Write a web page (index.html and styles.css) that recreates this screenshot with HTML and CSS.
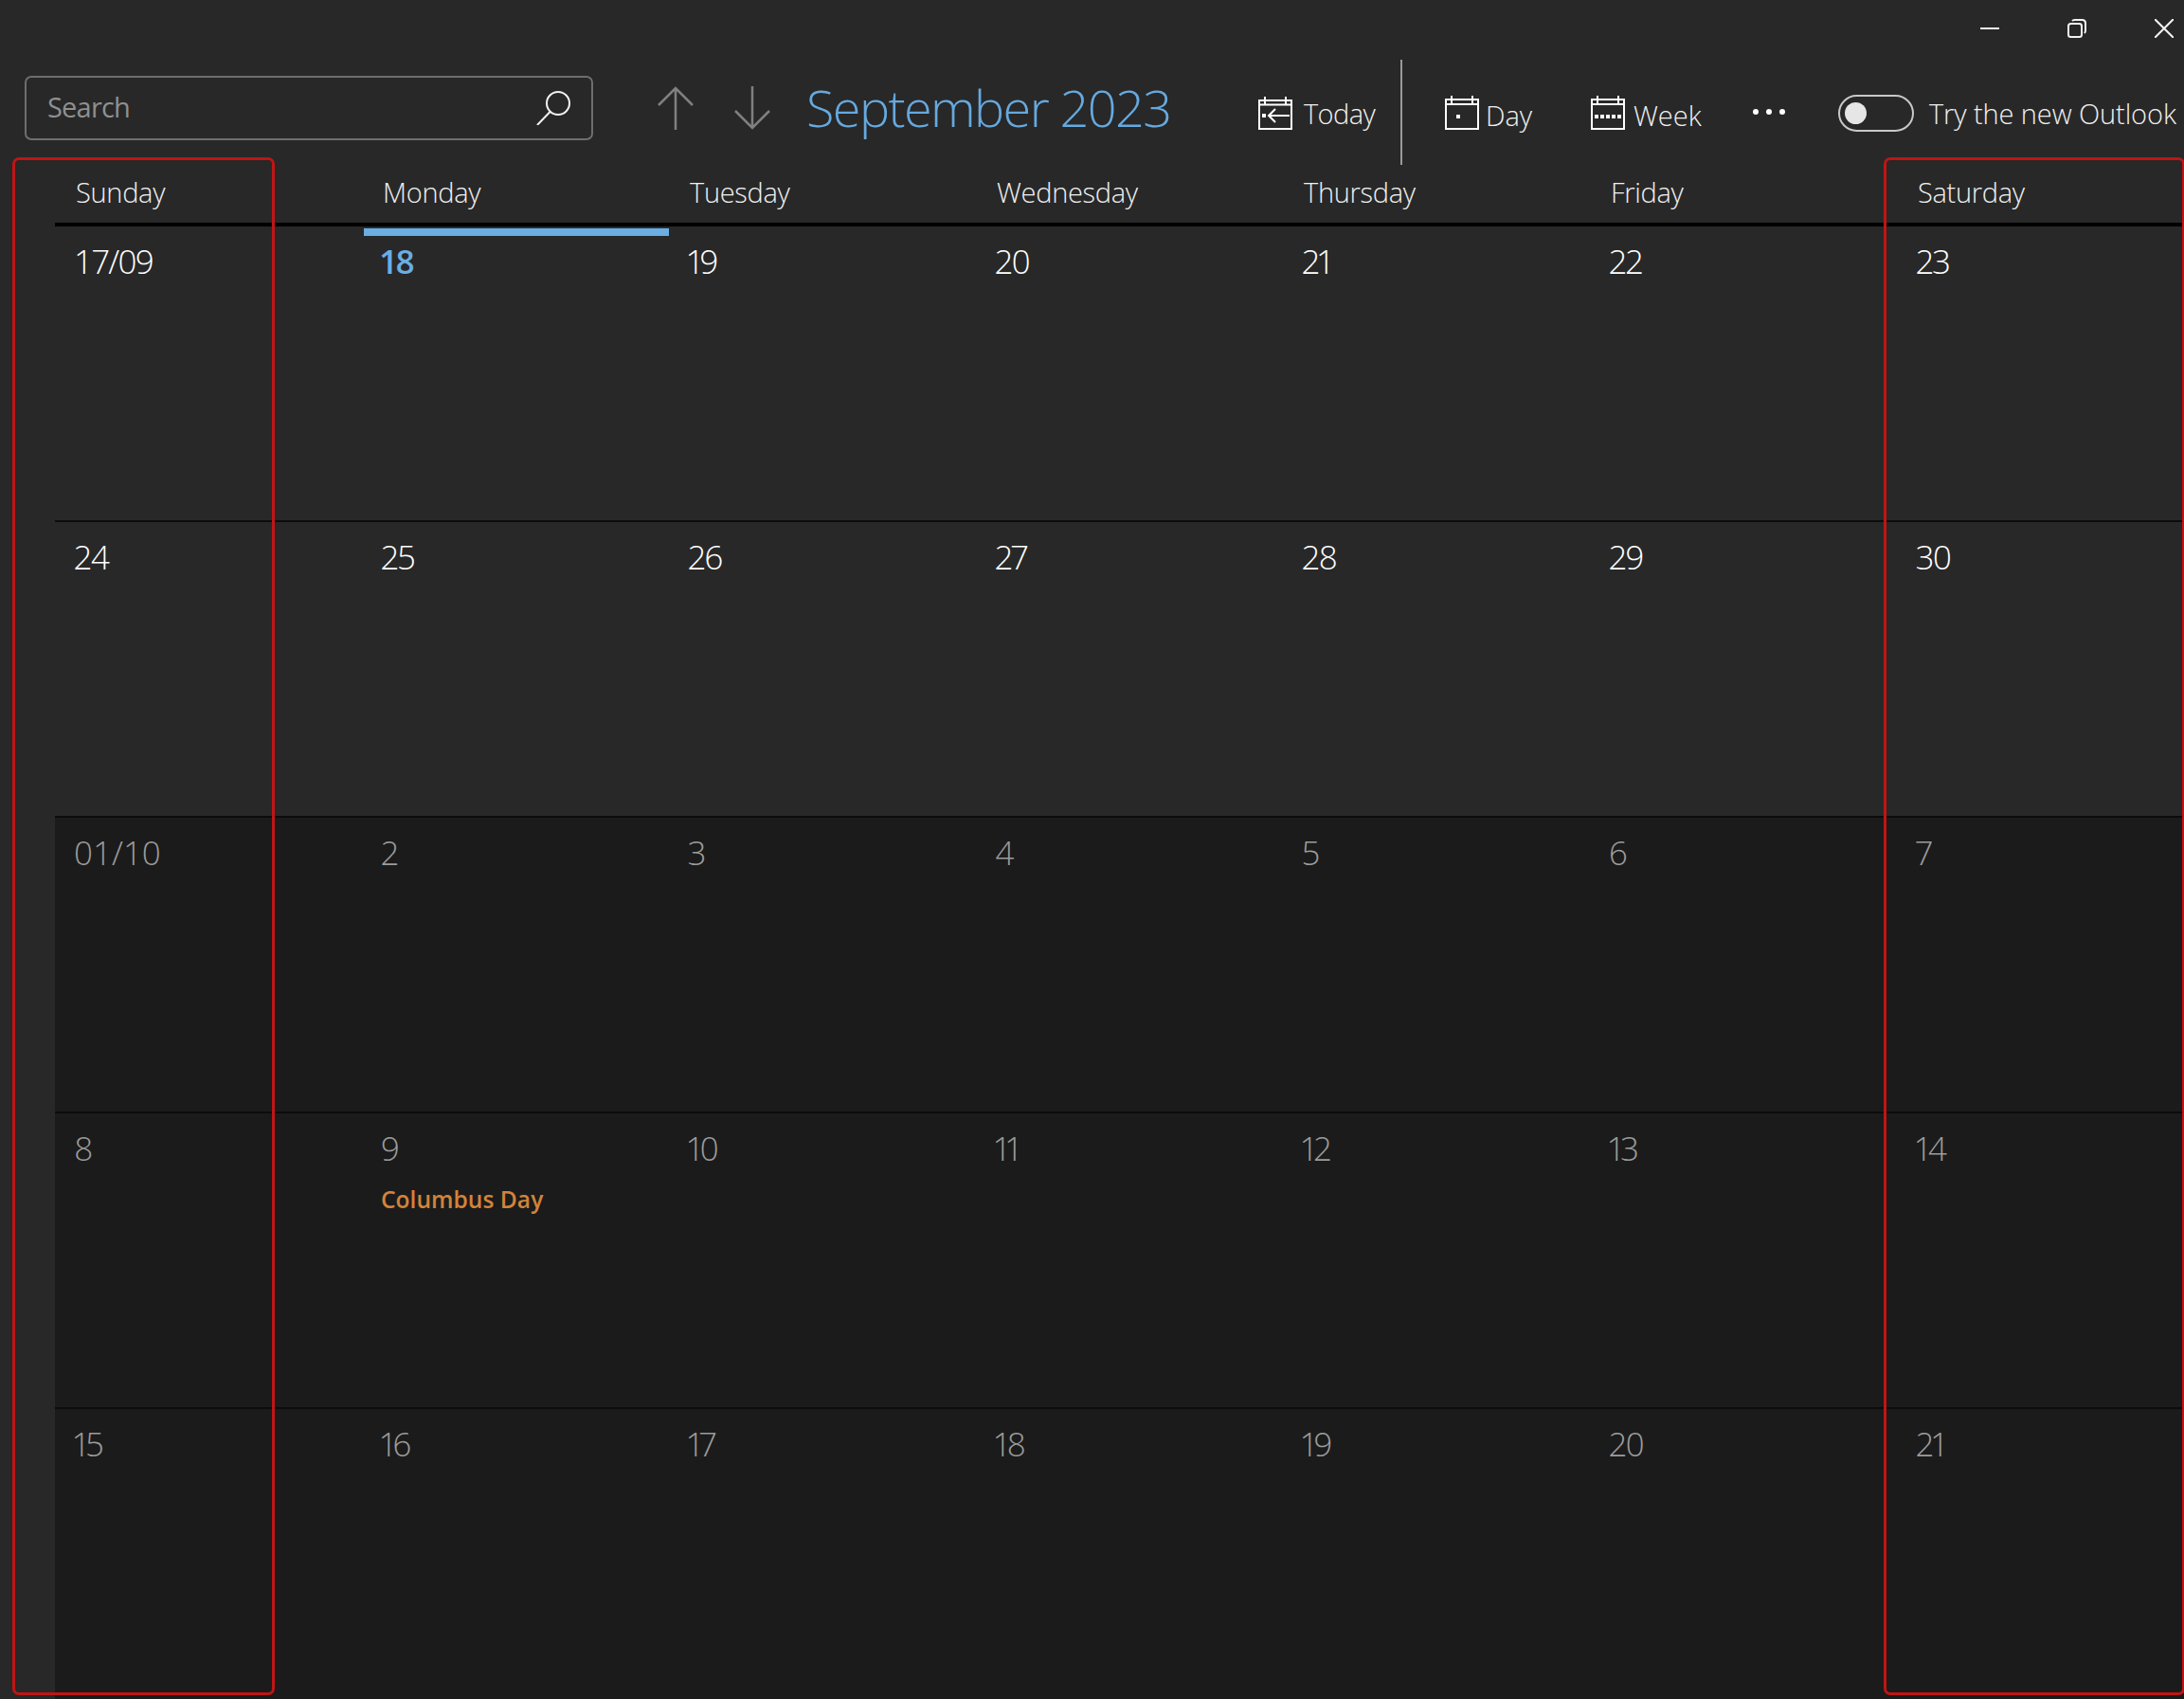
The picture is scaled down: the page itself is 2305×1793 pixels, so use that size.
FILE: index.html
```html
<!DOCTYPE html>
<html lang="en">
<head>
  <meta charset="UTF-8" />
  <title>Calendar</title>
  <link rel="stylesheet" href="styles.css">
</head>
<body>
  <div class="window">
    <div class="titlebar">
      <svg class="win-icon win-min" viewBox="0 0 20 20"><path d="M0 10H20" /></svg>
      <svg class="win-icon win-restore" viewBox="0 0 20 20"><rect x="1" y="5" width="14" height="14" rx="2.5" /><path d="M5 2.2C5.6 1.4 6.4 1 7.5 1H15.5C17.5 1 19 2.500 19 4.500V12.500C19 13.600 18.600 14.400 17.800 15" /></svg>
      <svg class="win-icon win-close" viewBox="0 0 20 20"><path d="M0 0L20 20M20 0L0 20" /></svg>
    </div>

    <div class="toolbar">
      <div class="search">
        <span class="search-text">Search</span>
        <svg class="search-icon" viewBox="0 0 37 36"><circle cx="23" cy="13" r="12" /><path d="M14.500 22L1 36" /></svg>
      </div>
      <svg class="nav-arrow nav-up" viewBox="0 0 38 46"><path d="M19 46V2M1 20L19 2L37 20" /></svg>
      <svg class="nav-arrow nav-down" viewBox="0 0 38 46"><path d="M19 0V44M1 26L19 44L37 26" /></svg>
      <div class="month-title">September 2023</div>

      <div class="tool tool-today">
        <svg class="cal-icon" viewBox="0 0 36 36"><path d="M1 4H35V34H1ZM1 8.500H35M7 0V8.500M29 0V8.500M11 20H33M18 13L11 20L18 27" /><rect class="cal-dot" x="4" y="18" width="4" height="4" /></svg>
        <span>Today</span>
      </div>
      <div class="tool-sep"></div>
      <div class="tool tool-day">
        <svg class="cal-icon" viewBox="0 0 36 36"><path d="M1 4H35V35H1ZM1 9H35M7 0V9M29 0V9" /><rect class="cal-dot" x="12" y="20" width="4" height="4" /></svg>
        <span>Day</span>
      </div>
      <div class="tool tool-week">
        <svg class="cal-icon" viewBox="0 0 36 36"><path d="M1 4H35V35H1ZM1 9H35M7 0V9M29 0V9" /><path class="cal-dash" d="M4 22H32" /></svg>
        <span>Week</span>
      </div>
      <div class="more"><i></i><i></i><i></i></div>
      <div class="toggle"><div class="knob"></div></div>
      <div class="toggle-label">Try the new Outlook</div>
    </div>

    <div class="weekdays">
      <div>Sunday</div>
      <div>Monday</div>
      <div>Tuesday</div>
      <div>Wednesday</div>
      <div>Thursday</div>
      <div>Friday</div>
      <div>Saturday</div>
    </div>

    <div class="week">
      <div class="day"><span class="num num-date">17/09</span></div>
      <div class="day today"><span class="num">18</span></div>
      <div class="day"><span class="num">19</span></div>
      <div class="day"><span class="num">20</span></div>
      <div class="day"><span class="num">21</span></div>
      <div class="day"><span class="num">22</span></div>
      <div class="day"><span class="num">23</span></div>
    </div>
    <div class="week">
      <div class="day"><span class="num">24</span></div>
      <div class="day"><span class="num">25</span></div>
      <div class="day"><span class="num">26</span></div>
      <div class="day"><span class="num">27</span></div>
      <div class="day"><span class="num">28</span></div>
      <div class="day"><span class="num">29</span></div>
      <div class="day"><span class="num">30</span></div>
    </div>
    <div class="week other">
      <div class="day"><span class="num num-date num-wide">01/10</span></div>
      <div class="day"><span class="num">2</span></div>
      <div class="day"><span class="num">3</span></div>
      <div class="day"><span class="num">4</span></div>
      <div class="day"><span class="num">5</span></div>
      <div class="day"><span class="num">6</span></div>
      <div class="day"><span class="num">7</span></div>
    </div>
    <div class="week other">
      <div class="day"><span class="num">8</span></div>
      <div class="day"><span class="num">9</span><span class="event">Columbus Day</span></div>
      <div class="day"><span class="num">10</span></div>
      <div class="day"><span class="num">11</span></div>
      <div class="day"><span class="num">12</span></div>
      <div class="day"><span class="num">13</span></div>
      <div class="day"><span class="num">14</span></div>
    </div>
    <div class="week other last">
      <div class="day"><span class="num">15</span></div>
      <div class="day"><span class="num">16</span></div>
      <div class="day"><span class="num">17</span></div>
      <div class="day"><span class="num">18</span></div>
      <div class="day"><span class="num">19</span></div>
      <div class="day"><span class="num">20</span></div>
      <div class="day"><span class="num">21</span></div>
    </div>

    <div class="mark mark-sunday"></div>
    <div class="mark mark-saturday"></div>
  </div>
</body>
</html>
```

FILE: styles.css
```css
html, body {
  margin: 0;
  padding: 0;
  background: #282828;
}
.window {
  position: relative;
  width: 2305px;
  height: 1793px;
  overflow: hidden;
  background: #282828;
  color: #fff;
  font-family: 'Open Sans', 'Liberation Sans', sans-serif;
  font-weight: 300;
  font-size: 29px;
}

/* title bar */
.titlebar {
  display: flex;
  align-items: center;
  height: 64px;
  padding-left: 2090px;
  box-sizing: border-box;
  padding-bottom: 4px;
}
.win-icon {
  width: 20px;
  height: 20px;
  fill: none;
  stroke: #f2f2f2;
  stroke-width: 2;
}
.win-restore {
  margin-left: 72px;
}
.win-close {
  margin-left: 72px;
}

/* toolbar */
.toolbar {
  display: flex;
  align-items: center;
  height: 100px;
  padding-left: 26px;
  white-space: nowrap;
}
.search {
  display: flex;
  align-items: center;
  justify-content: space-between;
  width: 600px;
  height: 68px;
  box-sizing: border-box;
  margin-top: -1px;
  padding: 0 21px 0 22px;
  border: 2px solid #6e6e6e;
  border-radius: 7px;
}
.search-text {
  color: #8f8f8f;
  font-weight: 400;
  letter-spacing: -0.8px;
  margin-bottom: 2px;
}
.search-icon {
  width: 37px;
  height: 36px;
  fill: none;
  stroke: #f2f2f2;
  stroke-width: 2;
}
.nav-arrow {
  width: 38px;
  height: 46px;
  fill: none;
  stroke: #808080;
  stroke-width: 2.5;
}
.nav-up {
  margin-left: 68px;
}
.nav-down {
  margin-left: 43px;
}
.month-title {
  width: 477px;
  margin-left: 38px;
  color: #66a9df;
  font-size: 54px;
  letter-spacing: -1.6px;
  margin-top: -2px;
}
.tool {
  display: flex;
  align-items: center;
  gap: 12px;
  color: #f0f0f0;
}
.cal-icon {
  width: 36px;
  height: 36px;
  fill: none;
  stroke: #fff;
  stroke-width: 2;
}
.cal-dot {
  fill: #fff;
  stroke: none;
}
.cal-dash {
  stroke-width: 4;
  stroke-dasharray: 4 2;
}
.tool-today {
  width: 150px;
  margin-top: 11px;
}
.tool-today span {
  margin-bottom: 1px;
  letter-spacing: -0.6px;
}
.tool-sep {
  align-self: flex-start;
  width: 2px;
  height: 111px;
  margin-top: -1px;
  background: #9a9a9a;
}
.tool-day {
  width: 154px;
  margin-left: 45px;
  margin-top: 9px;
  gap: 7px;
}
.tool-week {
  width: 171px;
  margin-top: 9px;
  gap: 9px;
}
.tool-day span,
.tool-week span {
  margin-top: 5px;
}
.more {
  display: flex;
  gap: 8px;
  width: 34px;
  margin-top: 8px;
}
.more i {
  width: 6px;
  height: 6px;
  border-radius: 50%;
  background: #fff;
}
.toggle {
  width: 80px;
  height: 39px;
  box-sizing: border-box;
  margin-left: 56px;
  margin-top: 10px;
  padding: 6px 5px;
  border: 2px solid #c8c8c8;
  border-radius: 20px;
}
.knob {
  width: 23px;
  height: 23px;
  border-radius: 50%;
  background: #e6e6e6;
}
.toggle-label {
  margin-left: 16px;
  margin-top: 10px;
  color: #f0f0f0;
  letter-spacing: -0.1px;
}

/* calendar grid */
.weekdays,
.week {
  display: grid;
  grid-template-columns: repeat(7, 324px);
  margin-left: 58px;
}
.weekdays {
  height: 75px;
  border-bottom: 4px solid #000;
  box-sizing: border-box;
  color: #f0f0f0;
  line-height: 72px;
  letter-spacing: -0.3px;
}
.weekdays div {
  padding-top: 3px;
  padding-left: 22px;
}
.week {
  height: 312px;
  box-sizing: border-box;
  border-bottom: 2px solid #0c0c0c;
}
.week.other {
  background: #1b1b1b;
  color: #9c9c9c;
}
.week.last {
  border-bottom: none;
}
.day {
  padding: 0 0 0 20px;
  min-width: 0;
}
.num {
  display: block;
  margin-top: 12px;
  font-size: 35px;
  line-height: 50px;
  letter-spacing: -1.3px;
  font-variant-numeric: proportional-nums;
}
.num-date {
  letter-spacing: -1.8px;
  font-variant-numeric: tabular-nums;
}
.num-wide {
  letter-spacing: 0;
}
.today {
  position: relative;
  color: #6aaee3;
}
.today .num {
  font-weight: 600;
}
.today::before {
  content: "";
  display: block;
  height: 8px;
  margin: 2px 0 -10px -18px;
  background: #6aaee3;
}
.event {
  display: block;
  margin-top: 12px;
  color: #d2833a;
  font-size: 24.6px;
  font-weight: 600;
}

/* red highlight boxes drawn over the screenshot */
.mark {
  position: absolute;
  top: 166px;
  height: 1623px;
  box-sizing: border-box;
  border: 3px solid #bf1515;
  border-radius: 7px;
}
.mark-sunday {
  left: 13px;
  width: 277px;
}
.mark-saturday {
  left: 1988px;
  width: 318px;
}
```
